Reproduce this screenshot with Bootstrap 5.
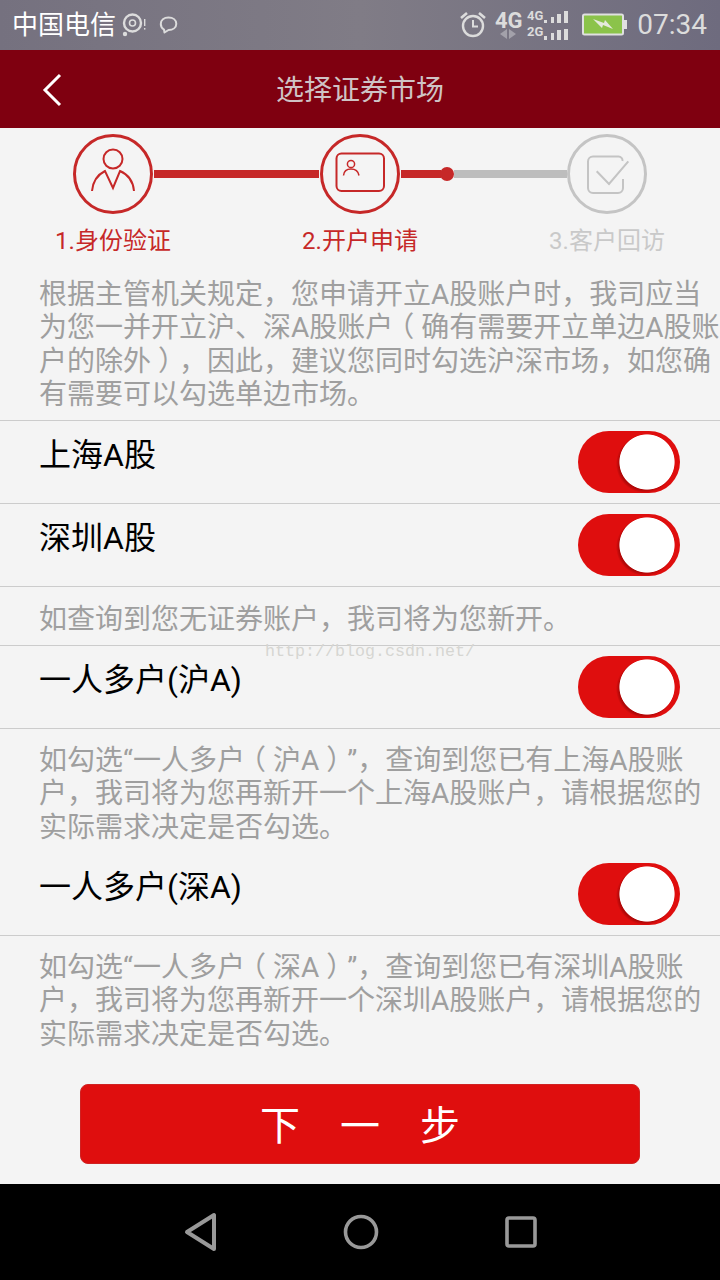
<!DOCTYPE html>
<html lang="zh-CN">
<head>
  <meta charset="UTF-8" />
  <meta name="viewport" content="width=device-width, initial-scale=1.0" />
  <title>选择证券市场</title>
  <link href="https://cdn.jsdelivr.net/npm/bootstrap@5.3.0/dist/css/bootstrap.min.css" rel="stylesheet" />
  <style>
    html, body { height: 1280px; overflow: hidden; }
    body { background: #f4f4f4; font-family: Roboto, "Noto Sans CJK SC", sans-serif; }
    .phone { width: 720px; height: 1280px; }

    .status-bar { height: 50px; padding: 0 13px 0 12px; color: #fff; background: linear-gradient(90deg, #75717f, #807c86 50%, #6e6b7e); }
    .carrier { font-size: 26px; line-height: 50px; }
    .clock { font-size: 28px; line-height: 50px; color: #dcdcdc; margin-left: 9px; }
    .tiny-label { font-family: Roboto, sans-serif; font-weight: 700; fill: #dcdcdc; }
    .batt { margin-left: 11px; }

    .title-bar { height: 78px; background: #7f0010; padding: 0; }
    .title-text { font-size: 28px; line-height: 74px; padding-top: 4px; color: #cfc3c5; }
    .back-btn { left: 42px; top: 23px; }

    .stepper { padding: 6px 0 19px; }
    .step-track { padding-left: 73px; height: 80px; }
    .step-line { height: 8px; background: #c62828; }
    .step-line.first { width: 165px; margin: 0 1px; }
    .step-line.second { width: 40px; margin-left: 1px; }
    .step-dot { width: 14px; height: 14px; margin-left: -1px; background: #c62828; }
    .step-line.rest { width: 113px; background: #bdbdbd; }
    .step-labels { margin-top: 10px; }
    .step-label { flex: none; width: 247px; text-align: center; font-size: 24px; line-height: 34px; color: #c62828; }
    .step-label.todo { color: #c9c9c9; }

    .note { padding: 0 0 9px 39px; font-size: 28px; line-height: 33.3px; color: #9f9f9f; white-space: nowrap; overflow: hidden; text-spacing-trim: space-all; }
    .note.intro { padding-top: 1px; }
    .note.single { padding-top: 16px; padding-bottom: 8.7px; }
    .note.spaced { padding-top: 15px; padding-bottom: 9.1px; }
    .mid-paren { display: inline-block; width: 1em; text-align: center; font-feature-settings: "halt"; }
    .market-row { height: 83px; padding: 10px 40px 0 39px; border-bottom: 1px solid #cccccc; }
    .market-row.top-line { border-top: 1px solid #cccccc; height: 84px; }
    .market-name { font-size: 32px; line-height: 46px; margin-top: 1px; color: #000; }

    .form-switch .sw-red.form-check-input,
    .form-switch .sw-red.form-check-input:checked,
    .form-switch .sw-red.form-check-input:focus {
      width: 102px; height: 62px; margin: 0; float: none; border: 0; border-radius: 31px; box-shadow: none;
      background-color: #df0e0e; background-position: 0 0; background-size: auto;
      background-image: radial-gradient(circle 28px at 69px 31px, #fff 97%, rgba(255,255,255,0) 100%),
                        radial-gradient(circle 29px at 67px 33px, rgba(120,0,0,.45) 90%, rgba(120,0,0,0) 100%);
    }
    .switch-box { padding: 0; margin: 0; min-height: 0; }

    .next-wrap { padding: 24px 80px 20px; }
    .next-btn { width: 560px; height: 80px; padding: 6px 0 0 40px; background: #df0e0e; border: 1px solid #cf2222; border-radius: 8px; color: #fff; font-size: 40px; line-height: 1; letter-spacing: 40px; }
    .next-btn:hover { background: #df0e0e; border-color: #cf2222; color: #fff; }

    .android-nav { height: 96px; padding-left: 2px; background: #000; }
    .nav-slot { width: 160px; }

    .watermark { left: 265px; top: 640px; font-family: "Liberation Mono", monospace; font-size: 16.67px; line-height: 24px; color: #d6d6d2; pointer-events: none; }
  </style>
</head>
<body>
  <div class="phone position-relative">

    <div class="status-bar d-flex align-items-center">
      <span class="carrier">中国电信</span>
      <svg class="ms-1" width="28" height="30" viewBox="0 0 28 30">
        <circle cx="12.5" cy="13" r="8.5" fill="none" stroke="#dcdcdc" stroke-width="2.4"/>
        <circle cx="12.5" cy="13" r="3" fill="none" stroke="#dcdcdc" stroke-width="1.6"/>
        <circle cx="5" cy="24" r="2.2" fill="#dcdcdc"/>
        <rect x="24" y="9" width="1.4" height="7" fill="#dcdcdc"/>
        <rect x="24" y="18" width="1.4" height="1.6" fill="#dcdcdc"/>
      </svg>
      <svg class="ms-2" width="23" height="22" viewBox="-3 0 23 22">
        <path d="M5 15.5 C2.5 14 1.8 12 1.8 10 C1.8 6 5 3.5 9.5 3.5 C14 3.5 17.3 6 17.3 9.7 C17.3 13.5 14 16 9.5 16 L5.5 18.5 Z" fill="none" stroke="#dcdcdc" stroke-width="2" stroke-linejoin="round"/>
      </svg>
      <div class="ms-auto d-flex align-items-center">
        <svg width="28" height="30" viewBox="0 0 28 30">
          <circle cx="14" cy="16" r="10" fill="none" stroke="#dcdcdc" stroke-width="2.4"/>
          <path d="M14 10 V16.5 H19" fill="none" stroke="#dcdcdc" stroke-width="2"/>
          <path d="M2 8 L8 3 M26 8 L20 3" stroke="#dcdcdc" stroke-width="2.6"/>
        </svg>
        <svg class="ms-2" width="76" height="32" viewBox="0 0 76 32">
          <text class="tiny-label" x="0" y="19" font-size="22">4G</text>
          <path d="M12 20 V30 L5 25 Z" fill="#a3a1aa"/>
          <path d="M14 20 V30 L21 25 Z" fill="#a3a1aa"/>
          <text class="tiny-label" x="32" y="11" font-size="13">4G</text>
          <text class="tiny-label" x="32" y="27" font-size="13">2G</text>
          <g fill="#dcdcdc">
            <rect x="49" y="11" width="3" height="3"/><rect x="56" y="8" width="3" height="6"/><rect x="62" y="5" width="4" height="9"/><rect x="69" y="2" width="4" height="12"/>
            <rect x="49" y="27" width="3" height="4"/><rect x="56" y="24" width="3" height="7"/><rect x="62" y="21" width="4" height="10"/><rect x="69" y="20" width="4" height="11"/>
          </g>
        </svg>
        <svg class="batt" width="46" height="24" viewBox="0 0 46 24">
          <rect x="1" y="1.5" width="40" height="20" rx="1.5" fill="#8bc34a" stroke="#e0e0e0" stroke-width="2"/>
          <rect x="42" y="7" width="3" height="9" fill="#e0e0e0"/>
          <path d="M11 6 L22 10 L23 7 L31 16 L21 12 L20 15 Z" fill="#e4e9dc"/>
        </svg>
        <span class="clock">07:34</span>
      </div>
    </div>

    <nav class="navbar title-bar justify-content-center position-relative">
      <svg class="back-btn position-absolute" width="20" height="34" viewBox="0 0 20 34">
        <path d="M18 2 L3 17 L18 32" fill="none" stroke="#fff" stroke-width="3"/>
      </svg>
      <span class="title-text">选择证券市场</span>
    </nav>

    <div class="stepper">
      <div class="step-track d-flex align-items-center">
        <svg width="80" height="80" viewBox="0 0 80 80" fill="none" stroke="#c62828" stroke-width="2">
          <circle cx="40" cy="40" r="38.5" stroke-width="3"/>
          <circle cx="40" cy="25" r="9.5"/>
          <path d="M19 57 C20 46 26 40 32 37 L40 54 L47 37 C54 40 60 46 61 57"/>
        </svg>
        <div class="step-line first"></div>
        <svg width="80" height="80" viewBox="0 0 80 80" fill="none" stroke="#c62828" stroke-width="2">
          <circle cx="40" cy="40" r="38.5" stroke-width="3"/>
          <rect x="16.5" y="19.5" width="47.5" height="37.5" rx="5"/>
          <circle cx="31" cy="30" r="3.6" stroke-width="1.5"/>
          <path d="M23.5 41.5 C24 36 28 35 31 35 C34 35 38 36 39 41.5" stroke-width="1.5"/>
        </svg>
        <div class="step-line second"></div>
        <div class="step-dot rounded-circle"></div>
        <div class="step-line rest"></div>
        <svg width="80" height="80" viewBox="0 0 80 80" fill="none" stroke="#c4c4c4" stroke-width="2">
          <circle cx="40" cy="40" r="38.5" stroke-width="3"/>
          <path d="M55.5 27 a4 4 0 0 0 -4 -4.5 H26 a5 5 0 0 0 -5 5 V54 a5 5 0 0 0 5 5 H51 a5 5 0 0 0 5 -5 V45"/>
          <path d="M29.7 37.3 L42 50 L61.3 27.3"/>
        </svg>
      </div>
      <div class="step-labels d-flex justify-content-center">
        <div class="step-label">1.身份验证</div>
        <div class="step-label">2.开户申请</div>
        <div class="step-label todo">3.客户回访</div>
      </div>
    </div>

    <div class="note intro">根据主管机关规定，您申请开立A股账户时，我司应当<br />为您一并开立沪、深A股账户<span class="mid-paren">（</span>确有需要开立单边A股账<br />户的除外<span class="mid-paren">）</span>，因此，建议您同时勾选沪深市场，如您确<br />有需要可以勾选单边市场。</div>

    <div class="market-row top-line d-flex justify-content-between align-items-start">
      <span class="market-name">上海A股</span>
      <div class="form-check form-switch switch-box"><input class="form-check-input sw-red" type="checkbox" role="switch" checked /></div>
    </div>
    <div class="market-row d-flex justify-content-between align-items-start">
      <span class="market-name">深圳A股</span>
      <div class="form-check form-switch switch-box"><input class="form-check-input sw-red" type="checkbox" role="switch" checked /></div>
    </div>

    <div class="note single">如查询到您无证券账户，我司将为您新开。</div>

    <div class="market-row top-line d-flex justify-content-between align-items-start">
      <span class="market-name">一人多户(沪A)</span>
      <div class="form-check form-switch switch-box"><input class="form-check-input sw-red" type="checkbox" role="switch" checked /></div>
    </div>

    <div class="note spaced">如勾选“一人多户<span class="mid-paren">（</span>沪A<span class="mid-paren">）</span>”，查询到您已有上海A股账<br />户，我司将为您再新开一个上海A股账户，请根据您的<br />实际需求决定是否勾选。</div>

    <div class="market-row d-flex justify-content-between align-items-start">
      <span class="market-name">一人多户(深A)</span>
      <div class="form-check form-switch switch-box"><input class="form-check-input sw-red" type="checkbox" role="switch" checked /></div>
    </div>

    <div class="note spaced">如勾选“一人多户<span class="mid-paren">（</span>深A<span class="mid-paren">）</span>”，查询到您已有深圳A股账<br />户，我司将为您再新开一个深圳A股账户，请根据您的<br />实际需求决定是否勾选。</div>

    <div class="next-wrap">
      <button type="button" class="btn next-btn">下一步</button>
    </div>

    <div class="android-nav d-flex justify-content-center align-items-center">
      <div class="nav-slot d-flex justify-content-center">
        <svg width="36" height="40" viewBox="0 0 36 40"><path d="M31 3 V37 L4 20 Z" fill="none" stroke="#999" stroke-width="4" stroke-linejoin="round"/></svg>
      </div>
      <div class="nav-slot d-flex justify-content-center">
        <svg width="36" height="36" viewBox="0 0 36 36"><circle cx="18" cy="18" r="15.5" fill="none" stroke="#999" stroke-width="3.6"/></svg>
      </div>
      <div class="nav-slot d-flex justify-content-center">
        <svg width="32" height="32" viewBox="0 0 32 32"><rect x="2" y="2" width="28" height="28" rx="2" fill="none" stroke="#999" stroke-width="3.6"/></svg>
      </div>
    </div>

    <div class="watermark position-absolute">http://blog.csdn.net/</div>
  </div>
  <script src="https://cdn.jsdelivr.net/npm/bootstrap@5.3.0/dist/js/bootstrap.bundle.min.js"></script>
</body>
</html>
